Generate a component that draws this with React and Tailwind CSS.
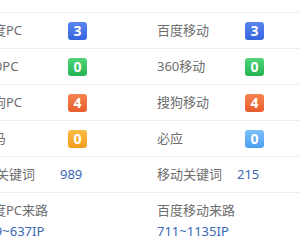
import React from "react";

const badgeStyles = {
  blue: "bg-gradient-to-b from-[#5a86f0] to-[#3563dc]",
  green: "bg-gradient-to-b from-[#4fd47a] to-[#22b351]",
  orange: "bg-gradient-to-b from-[#f5844f] to-[#e85c2c]",
  amber: "bg-gradient-to-b from-[#fbbd45] to-[#f29c1c]",
  sky: "bg-gradient-to-b from-[#7cc0fa] to-[#4a9ef0]",
};

function Badge({ color, children }) {
  return (
    <span
      className={`flex h-[18px] w-[19px] items-center justify-center rounded-[3px] text-[14px] font-bold leading-none text-white ${badgeStyles[color]}`}
    >
      {children}
    </span>
  );
}

function Cell({ label, children }) {
  return (
    <div className="flex w-[177px] items-center">
      <span className="w-[88px] shrink-0 text-[13px] text-[#6e6e6e]">{label}</span>
      {children}
    </div>
  );
}

function Row({ children, extra = "" }) {
  return (
    <div className={`flex h-[36px] items-center border-b border-[#eeeeee] ${extra}`}>{children}</div>
  );
}

export default function App() {
  return (
    <div
      className="h-[250px] w-[300px] overflow-hidden bg-white"
      style={{ fontFamily: '"Noto Sans", "Noto Sans CJK SC", sans-serif' }}
    >
      <div className="ml-[-20px] mt-[-23px] w-[354px]">
        <Row extra="pb-[5px]">
          <Cell label="百度PC权重" />
          <Cell label="百度移动权重" />
        </Row>
        <Row>
          <Cell label="百度PC">
            <Badge color="blue">3</Badge>
          </Cell>
          <Cell label="百度移动">
            <Badge color="blue">3</Badge>
          </Cell>
        </Row>
        <Row>
          <Cell label="360PC">
            <Badge color="green">0</Badge>
          </Cell>
          <Cell label="360移动">
            <Badge color="green">0</Badge>
          </Cell>
        </Row>
        <Row>
          <Cell label="搜狗PC">
            <Badge color="orange">4</Badge>
          </Cell>
          <Cell label="搜狗移动">
            <Badge color="orange">4</Badge>
          </Cell>
        </Row>
        <Row>
          <Cell label="神马">
            <Badge color="amber">0</Badge>
          </Cell>
          <Cell label="必应">
            <Badge color="sky">0</Badge>
          </Cell>
        </Row>
        <div className="flex h-[36px] items-center border-b border-[#eeeeee]">
          <div className="flex w-[177px] items-center">
            <span className="w-[80px] shrink-0 text-[13px] text-[#6e6e6e]">PC关键词</span>
            <span className="text-[13px] text-[#3a68b4]">989</span>
          </div>
          <div className="flex w-[177px] items-center">
            <span className="w-[80px] shrink-0 text-[13px] text-[#6e6e6e]">移动关键词</span>
            <span className="text-[13px] text-[#3a68b4]">215</span>
          </div>
        </div>
        <div className="flex pt-[7px]">
          <div className="flex w-[177px] flex-col">
            <span className="text-[13px] leading-[20px] text-[#6e6e6e]">百度PC来路</span>
            <span className="mt-[1px] text-[13px] leading-[20px] text-[#3a68b4]">399~637IP</span>
          </div>
          <div className="flex w-[177px] flex-col">
            <span className="text-[13px] leading-[20px] text-[#6e6e6e]">百度移动来路</span>
            <span className="mt-[1px] text-[13px] leading-[20px] text-[#3a68b4]">711~1135IP</span>
          </div>
        </div>
      </div>
    </div>
  );
}
